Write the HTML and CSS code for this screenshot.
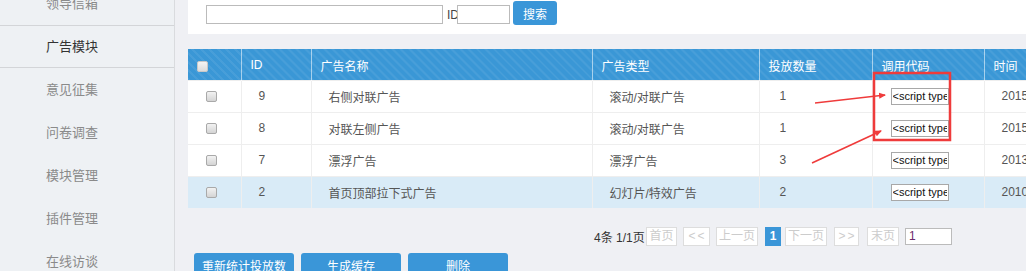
FILE: index.html
```html
<!DOCTYPE html>
<html lang="zh-CN">
<head>
<meta charset="UTF-8">
<title>广告模块</title>
<link rel="stylesheet" href="styles.css">
</head>
<body>

<div class="page">
    <div class="sidebar">
        <ul class="menu">
            <li>领导信箱</li>
            <li class="active">广告模块</li>
            <li>意见征集</li>
            <li>问卷调查</li>
            <li>模块管理</li>
            <li>插件管理</li>
            <li>在线访谈</li>
        </ul>
    </div>

    <div class="main">
        <div class="search-bar">
            <input type="text" class="kw">
            <span class="lbl">ID</span>
            <input type="text" class="id-input">
            <button class="btn-search">搜索</button>
        </div>

        <table class="grid">
            <thead>
                <tr>
                    <th class="c-chk"><span class="chk head-chk"></span></th>
                    <th class="c-id">ID</th>
                    <th class="c-name">广告名称</th>
                    <th class="c-type">广告类型</th>
                    <th class="c-num">投放数量</th>
                    <th class="c-code">调用代码</th>
                    <th class="c-time">时间</th>
                </tr>
            </thead>
            <tbody>
                <tr>
                    <td><span class="chk"></span></td>
                    <td>9</td>
                    <td>右侧对联广告</td>
                    <td>滚动/对联广告</td>
                    <td class="num">1</td>
                    <td><input class="code" type="text" value="&lt;script type=&quot;text/javascript&quot;&gt;"></td>
                    <td>2015-06-12</td>
                </tr>
                <tr>
                    <td><span class="chk"></span></td>
                    <td>8</td>
                    <td>对联左侧广告</td>
                    <td>滚动/对联广告</td>
                    <td class="num">1</td>
                    <td><input class="code" type="text" value="&lt;script type=&quot;text/javascript&quot;&gt;"></td>
                    <td>2015-06-12</td>
                </tr>
                <tr>
                    <td><span class="chk"></span></td>
                    <td>7</td>
                    <td>漂浮广告</td>
                    <td>漂浮广告</td>
                    <td class="num">3</td>
                    <td><input class="code" type="text" value="&lt;script type=&quot;text/javascript&quot;&gt;"></td>
                    <td>2013-04-02</td>
                </tr>
                <tr class="hover">
                    <td><span class="chk"></span></td>
                    <td>2</td>
                    <td>首页顶部拉下式广告</td>
                    <td>幻灯片/特效广告</td>
                    <td class="num">2</td>
                    <td><input class="code" type="text" value="&lt;script type=&quot;text/javascript&quot;&gt;"></td>
                    <td>2010-08-20</td>
                </tr>
            </tbody>
        </table>

        <div class="pager">
            <span class="total">4条 1/1页</span>
            <a class="pg w31">首页</a>
            <a class="pg arrow w27">&lt;&lt;</a>
            <a class="pg w42 gap7">上一页</a>
            <a class="pg cur">1</a>
            <a class="pg w42 gap7">下一页</a>
            <a class="pg arrow w25 gap8">&gt;&gt;</a>
            <a class="pg w32">末页</a>
            <input type="text" class="go" value="1">
        </div>

        <div class="actions">
            <button class="btn">重新统计投放数</button>
            <button class="btn">生成缓存</button>
            <button class="btn">删除</button>
        </div>
    </div>
</div>

<!-- screenshot annotation -->
<svg class="marks" width="1026" height="271" viewBox="0 0 1026 271">
    <defs>
        <marker id="head" markerWidth="8" markerHeight="8" refX="6" refY="4" orient="auto" markerUnits="userSpaceOnUse">
            <path d="M0,1 L7,4 L0,7 Z" fill="#ef3b3b"/>
        </marker>
    </defs>
    <rect x="874" y="73" width="76" height="67" fill="none" stroke="#ef3b3b" stroke-width="2.5"/>
    <line x1="815" y1="103" x2="885" y2="95" stroke="#ef3b3b" stroke-width="1.6" marker-end="url(#head)"/>
    <line x1="812" y1="163" x2="881" y2="131" stroke="#ef3b3b" stroke-width="1.6" marker-end="url(#head)"/>
</svg>

</body>
</html>
```

FILE: styles.css
```css
html, body {
    margin: 0;
    padding: 0;
    height: 271px;
    overflow: hidden;
}
body {
    font-family: "Liberation Sans", "Noto Sans CJK SC", sans-serif;
    font-size: 12px;
    color: #555;
    background-color: #eff0f4;
    position: relative;
}
.page {
    display: flex;
    height: 271px;
}
.sidebar {
    width: 174px;
    flex: none;
    background-color: #eef1f4;
    border-right: 1px solid #d9dbde;
    overflow: hidden;
}
.menu {
    list-style: none;
    margin: -18px 0 0;
    padding: 0;
}
.menu li {
    height: 41px;
    line-height: 41px;
    padding-left: 46px;
    font-size: 13px;
    color: #8a8a8a;
    border-top: 1px solid transparent;
    border-bottom: 1px solid transparent;
}
.menu li.active {
    color: #333;
    border-top-color: #d3d5d8;
    border-bottom-color: #d3d5d8;
}
.main {
    flex: 1;
    padding-left: 13px;
    min-width: 0;
    overflow: hidden;
}
.search-bar {
    background-color: #fff;
    height: 34px;
    display: flex;
    align-items: flex-start;
    padding: 0 0 0 18px;
    box-sizing: border-box;
    margin-bottom: 15px;
}
.search-bar input {
    box-sizing: border-box;
    height: 19px;
    border: 1px solid #bbb;
    margin: 5px 0 0;
    padding: 0 3px;
}
.kw {
    width: 237px;
}
.lbl {
    margin: 6px -2px 0 4px;
    line-height: 18px;
    color: #444;
}
.id-input {
    width: 53px;
}
.btn-search {
    margin: 1px 0 0 3px;
    width: 44px;
    height: 24px;
    border: none;
    border-radius: 3px;
    background-color: #3a96d8;
    color: #fff;
    font-family: inherit;
    font-size: 12px;
}
.grid {
    border-collapse: collapse;
    width: 900px;
    table-layout: fixed;
}
.grid th {
    box-sizing: border-box;
    height: 31px;
    padding: 2px 0 0 9px;
    text-align: left;
    font-weight: normal;
    color: #fff;
    background-color: #3a97d6;
    background-image: repeating-linear-gradient(45deg, rgba(255, 255, 255, 0.07) 0 2px, transparent 2px 6px);
    border-left: 1px solid rgba(255, 255, 255, 0.55);
}
.grid th:first-child {
    border-left: none;
}
.c-chk { width: 53px; }
.c-id { width: 70px; }
.c-name { width: 281px; }
.c-type { width: 167px; }
.c-num { width: 113px; }
.c-code { width: 112px; }
.grid td {
    height: 31px;
    padding: 0 0 0 17px;
    background-color: #fff;
    border-left: 1px solid #eee;
    border-top: 1px solid #eee;
    white-space: nowrap;
    overflow: hidden;
}
.grid td:first-child {
    border-left: none;
    padding-left: 18px;
}
.grid td.num {
    padding-left: 20px;
}
.grid tr.hover td {
    background-color: #d9ebf7;
}
.chk {
    display: inline-block;
    width: 9px;
    height: 9px;
    border: 1px solid #a9a9a9;
    border-radius: 2px;
    background: linear-gradient(#f2f2f2, #d4d4d4);
    vertical-align: middle;
}
.head-chk {
    border-color: #c8c8c8;
    background: linear-gradient(#f4f4f4, #dcdcdc);
}
.code {
    box-sizing: border-box;
    width: 58px;
    height: 17px;
    border: 1px solid #a8a8a8;
    padding: 0 1px;
    margin-left: 1px;
    font-family: "Liberation Sans", sans-serif;
    font-size: 11px;
    color: #111;
    vertical-align: middle;
}
.pager {
    display: flex;
    align-items: center;
    padding: 19px 0 0 406px;
    height: 19px;
}
.total {
    width: 47px;
    white-space: nowrap;
    color: #333;
    margin-right: 5px;
}
.pg {
    box-sizing: border-box;
    height: 19px;
    line-height: 17px;
    padding: 0;
    text-align: center;
    border: 1px solid #ddd;
    background-color: #fff;
    color: #ccc;
    margin-right: 6px;
    font-size: 12px;
    white-space: nowrap;
}
.w25 { width: 25px; }
.w27 { width: 27px; }
.w31 { width: 31px; }
.w32 { width: 32px; }
.w42 { width: 42px; }
.gap7 { margin-right: 7px; }
.gap8 { margin-right: 8px; }
.pg.arrow {
    letter-spacing: 2px;
    text-indent: 2px;
}
.pg.cur {
    width: 16px;
    background-color: #3a96d8;
    border-color: #3a96d8;
    color: #fff;
    font-weight: bold;
    margin-right: 4px;
}
.go {
    box-sizing: border-box;
    width: 47px;
    height: 17px;
    border: 1px solid #bbb;
    padding: 0 3px;
    font-size: 12px;
    color: #6b2a6b;
}
.actions {
    display: flex;
    gap: 7px;
    padding: 7px 0 0 6px;
}
.btn {
    width: 100px;
    height: 26px;
    border: none;
    border-radius: 3px;
    background-color: #3a96d8;
    color: #fff;
    font-family: inherit;
    font-size: 12px;
}
.marks {
    position: absolute;
    top: 0;
    left: 0;
    pointer-events: none;
}
```
